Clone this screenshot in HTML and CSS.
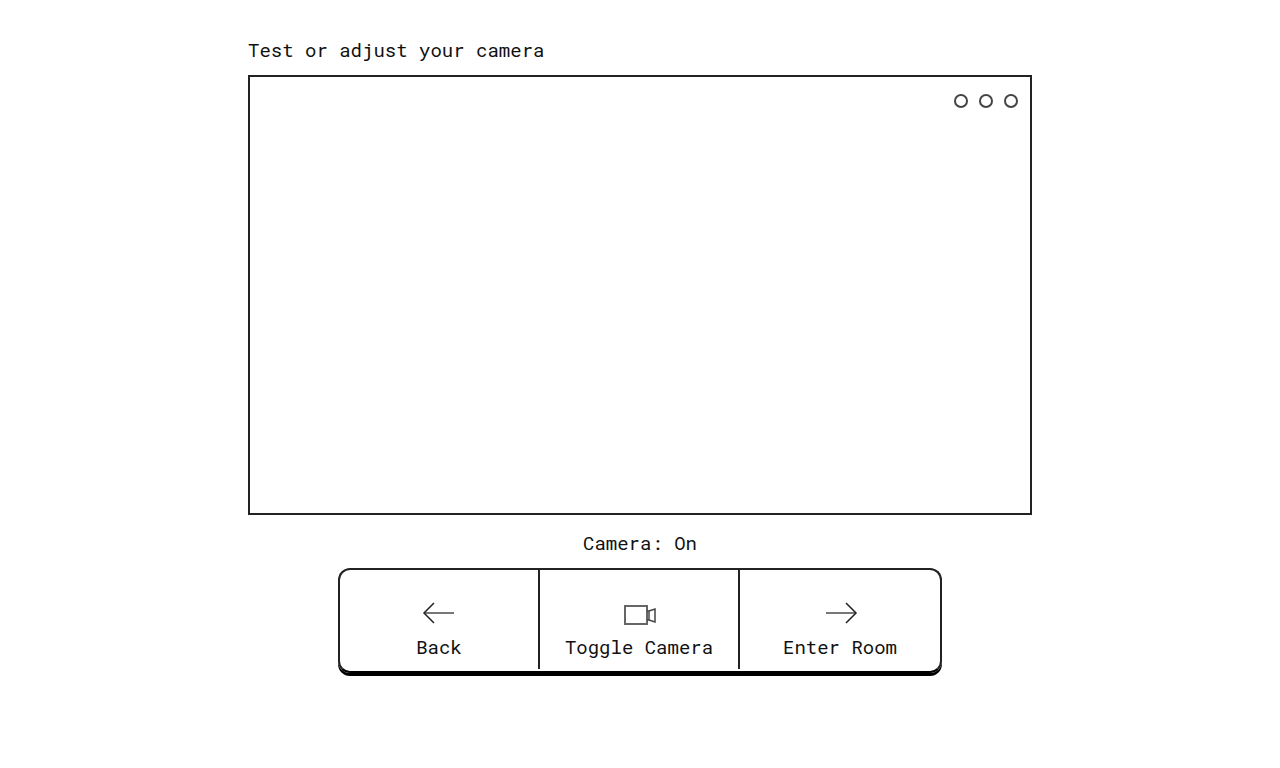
FILE: index.html
```html
<!DOCTYPE html>
<html lang="en">
<head>
<meta charset="utf-8">
<meta name="viewport" content="width=device-width, initial-scale=1">
<title>Camera test</title>
<link rel="stylesheet" href="styles.css">
</head>
<body>
<main class="page">
  <h1 class="title">Test or adjust your camera</h1>
  <section class="preview" aria-label="Camera preview">
    <span class="dot"></span><span class="dot"></span><span class="dot"></span>
  </section>
  <p class="status">Camera: On</p>
  <div class="controls">
    <button class="control" type="button">
      <svg class="icon" viewBox="0 0 36 28" aria-hidden="true"><path class="shaft" d="M33 14H4"/><path d="M13 4L3 14l10 10"/></svg>
      Back
    </button>
    <button class="control" type="button">
      <svg class="icon" viewBox="0 0 36 28" aria-hidden="true"><path class="body" d="M4 7h22v18H4z"/><path class="lens" d="M26 12h2l6-2v13l-6-2h-2M28 12v9"/></svg>
      Toggle Camera
    </button>
    <button class="control" type="button">
      <svg class="icon" viewBox="0 0 36 28" aria-hidden="true"><path class="shaft" d="M4 14h29"/><path d="M24 4l10 10-10 10"/></svg>
      Enter Room
    </button>
  </div>
</main>
</body>
</html>
```
FILE: styles.css
```css
* { box-sizing: border-box; }
body {
  margin: 0;
  background: #fff;
  color: #111;
  font-family: "Roboto Mono", "DejaVu Sans Mono", monospace;
  font-size: 19px;
  line-height: 24px;
}
.page {
  display: flex;
  flex-direction: column;
  max-width: 784px;
  margin: 0 auto;
  padding: 38px 0;
}
.title { margin: 0 0 13px; font-size: inherit; font-weight: 400; }
.preview {
  display: flex;
  justify-content: flex-end;
  gap: 11px;
  aspect-ratio: 784 / 440;
  padding: 17px 12px;
  border: 2px solid #222;
}
.dot { width: 14px; height: 14px; border: 2px solid #444; border-radius: 50%; }
.status { margin: 16px 0 13px; text-align: center; }
.controls {
  display: grid;
  grid-template-columns: repeat(3, 1fr);
  width: 100%;
  max-width: 604px;
  margin: 0 auto;
  padding-bottom: 2px;
  border: 2px solid #222;
  border-bottom-color: #000;
  border-radius: 12px;
  box-shadow: 0 3px 0 #000;
}
.control {
  display: flex;
  flex-direction: column;
  align-items: center;
  gap: 8px;
  padding: 29px 0 10px;
  border: 0;
  background: none;
  color: inherit;
  font: inherit;
}
.control:not(:last-child) { border-right: 2px solid #222; }
.icon { width: 36px; height: 28px; fill: none; stroke: #222; stroke-width: 1.5; }
.shaft { stroke: #777; stroke-width: 2; }
.body { stroke: #666; stroke-width: 2; }
.lens { stroke: #444; }
```
